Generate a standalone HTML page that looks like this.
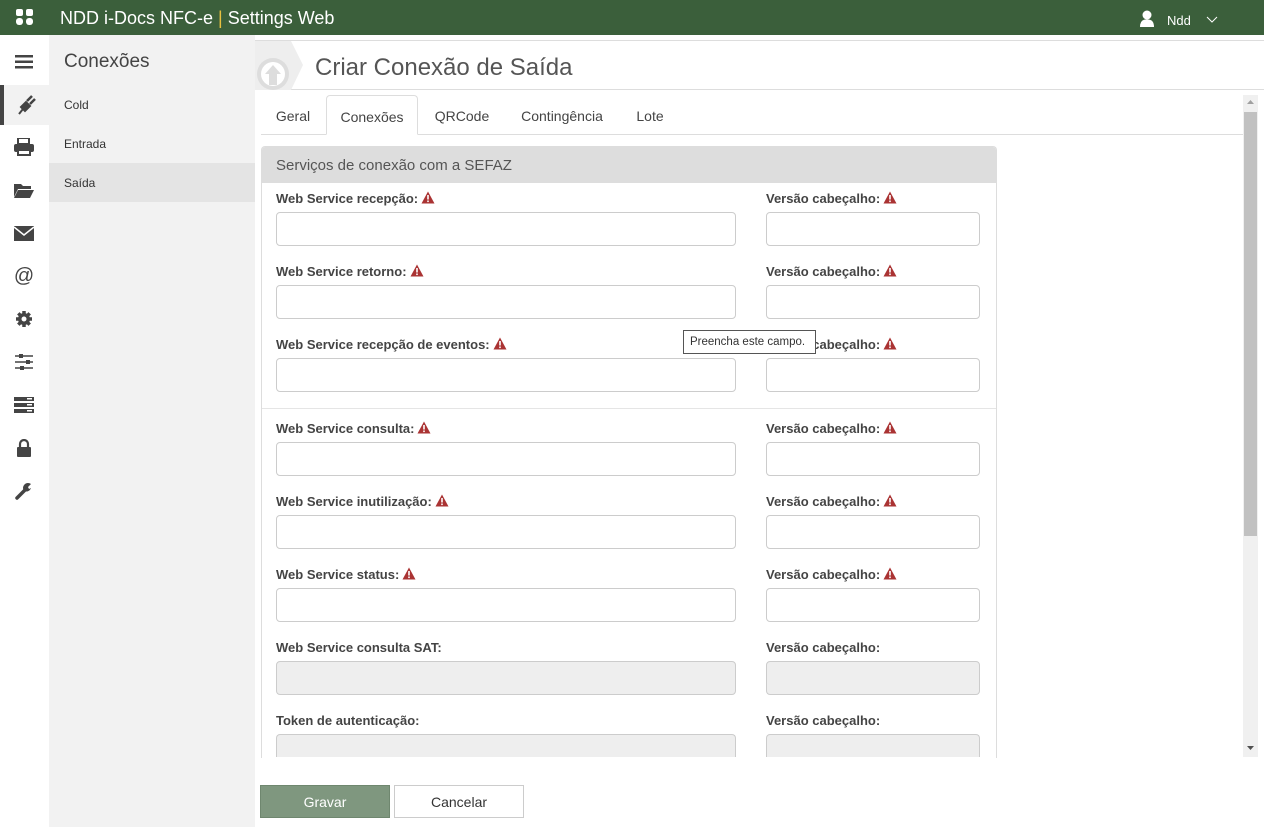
<!DOCTYPE html>
<html><head><meta charset="utf-8"><style>
*{box-sizing:border-box;margin:0;padding:0}
body{width:1264px;height:827px;overflow:hidden;font-family:"Liberation Sans",sans-serif;background:#fff;position:relative;color:#444}
.top{position:absolute;left:0;top:0;width:1264px;height:35px;background:#3b5f3b;color:#fff}
.top .t{position:absolute;left:60px;top:8px;font-size:18px}
.ic{position:absolute;left:0;top:35px;width:49px;height:792px;background:#fff}
.ic div{position:absolute;left:12px;width:24px;height:24px;display:flex;align-items:center;justify-content:center}
.side{position:absolute;left:49px;top:35px;width:206px;height:792px;background:#f2f2f2}
.side h2{position:absolute;left:15px;top:16px;font-size:19px;font-weight:normal;color:#444}
.side .it{position:absolute;left:0;width:206px;height:39px;font-size:12px;padding:13px 15px;color:#333}
.hdr{position:absolute;left:255px;top:40px;width:1009px;height:50px;border-top:1px solid #ddd;border-bottom:1px solid #ddd}
.hdr h1{position:absolute;left:60px;top:13px;font-size:24px;font-weight:normal;color:#555}
.tabs{position:absolute;left:261px;top:95px;width:982px;height:40px;border-bottom:1px solid #ddd}
.tab{position:absolute;top:0;height:40px;font-size:14px;padding-top:13px;color:#444;text-align:center}
.tab.a{border:1px solid #ddd;border-bottom:1px solid #fff;border-radius:4px 4px 0 0;background:#fff;height:40px}
.panel{position:absolute;left:261px;top:146px;width:736px;height:612px;border:1px solid #ddd;border-bottom:none;border-radius:4px 4px 0 0;overflow:hidden}
.ph{height:36px;background:#ddd;font-size:15px;padding:10px 14px;color:#555}
.lbl{position:absolute;font-size:13px;font-weight:bold;color:#444}
.inp{position:absolute;height:34px;border:1px solid #ccc;border-radius:4px;background:#fff}
.inp.d{background:#eee}
.w{display:inline-block;vertical-align:-1px;margin-left:3px}
.sb{position:absolute;left:1243px;top:95px;width:15px;height:662px;background:#f0f0f0}
.btn{position:absolute;top:785px;height:33px;font-size:14px;text-align:center;padding-top:8px}
</style></head><body>
<div class="top">
<svg style="position:absolute;left:16px;top:9px" width="18" height="17" viewBox="0 0 18 17"><rect x="0" y="0" width="7" height="7" rx="2" fill="#fff"/><rect x="10" y="0" width="7" height="7" rx="2" fill="#fff"/><rect x="0" y="9" width="7" height="7" rx="3" fill="#fff"/><rect x="10" y="9" width="7" height="7" rx="3" fill="#fff"/></svg>
<div class="t">NDD i-Docs NFC-e <span style="color:#e8c040">|</span> Settings Web</div>
<svg style="position:absolute;left:1139px;top:10px" width="16" height="17" viewBox="0 0 16 17"><circle cx="8" cy="5" r="4.5" fill="#fff"/><path d="M1 17 Q1 9 8 9.5 Q15 9 15 17Z" fill="#fff"/></svg>
<div style="position:absolute;left:1167px;top:13px;font-size:13px">Ndd</div>
<svg style="position:absolute;left:1206px;top:16px" width="12" height="7"><path d="M1 1 L6 6 L11 1" stroke="#fff" fill="none"/></svg>
</div>
<div class="ic">
<div style="top:15px"><svg width="18" height="14"><rect y="0" width="18" height="2.5" fill="#444"/><rect y="5.5" width="18" height="2.5" fill="#444"/><rect y="11" width="18" height="2.5" fill="#444"/></svg></div>
<div style="left:0;top:50px;width:49px;height:40px;background:#f2f2f2;border-left:4px solid #444"><svg width="20" height="20" viewBox="0 0 20 20"><path d="M2 19 L6 14 L4 12 L9 7 L13 11 L8 16 L6 14" fill="#444" stroke="#444" stroke-width="2"/><path d="M10 6 L15 1 M13 9 L18 4" stroke="#444" stroke-width="2.5"/></svg></div>
<div style="top:100px"><svg width="20" height="18"><rect x="4" y="0" width="11" height="6" fill="none" stroke="#444" stroke-width="2"/><rect x="0" y="6" width="20" height="8" rx="2" fill="#444"/><rect x="4" y="12" width="12" height="5" fill="#fff" stroke="#444" stroke-width="2"/></svg></div>
<div style="top:143px"><svg width="20" height="16"><path d="M0 2 L7 2 L9 4 L17 4 L17 7 L4 7 L0 15Z M4 8 L20 8 L16 16 L0 16Z" fill="#444"/></svg></div>
<div style="top:186px"><svg width="20" height="15"><rect width="20" height="15" fill="#444"/><path d="M0 1 L10 9 L20 1" stroke="#fff" stroke-width="1.5" fill="none"/></svg></div>
<div style="top:229px;font-size:20px;color:#444">@</div>
<div style="top:272px"><svg width="18" height="18" viewBox="0 0 18 18"><circle cx="9" cy="9" r="6" fill="#444"/><g stroke="#444" stroke-width="3.5"><path d="M9 1V17M1 9H17M3.3 3.3L14.7 14.7M14.7 3.3L3.3 14.7"/></g><circle cx="9" cy="9" r="2.5" fill="#fff"/></svg></div>
<div style="top:315px"><svg width="18" height="16"><g stroke="#444" stroke-width="1.5"><path d="M0 2H18M0 8H18M0 14H18"/></g><rect x="4" y="0" width="4" height="4" fill="#444"/><rect x="11" y="6" width="4" height="4" fill="#444"/><rect x="5" y="12" width="4" height="4" fill="#444"/></svg></div>
<div style="top:358px"><svg width="20" height="16"><rect y="0" width="20" height="4" fill="#444"/><rect y="6" width="20" height="4" fill="#444"/><rect y="12" width="20" height="4" fill="#444"/><g fill="#fff"><rect x="13" y="1" width="5" height="1.5"/><rect x="13" y="7" width="5" height="1.5"/><rect x="13" y="13" width="5" height="1.5"/></g></svg></div>
<div style="top:401px"><svg width="16" height="18"><path d="M4 8V5a4 4 0 0 1 8 0v3" stroke="#444" stroke-width="2.2" fill="none"/><rect x="1" y="8" width="14" height="10" rx="1" fill="#444"/></svg></div>
<div style="top:444px"><svg width="18" height="18" viewBox="0 0 18 18"><path d="M2 16 L10 8" stroke="#444" stroke-width="3.5" stroke-linecap="round"/><path d="M9 9 A5 5 0 0 1 16 2 L13 5 L14 7 L16 6 A5 5 0 0 1 9 9Z" fill="#444"/></svg></div>
</div>
<div class="side">
<h2>Conexões</h2>
<div class="it" style="top:50px">Cold</div>
<div class="it" style="top:89px">Entrada</div>
<div class="it" style="top:128px;background:#e4e4e4">Saída</div>
</div>
<div class="hdr">
<svg style="position:absolute;left:0;top:0" width="50" height="49"><path d="M0 0 H36 L48 24 L36 49 H0Z" fill="#eee"/><circle cx="18" cy="33" r="16" fill="#ddd"/><circle cx="18" cy="33" r="12" fill="#fff"/><path d="M18 24 L26 33 H22 V44 H14 V33 H10Z" fill="#ddd"/></svg>
<h1>Criar Conexão de Saída</h1>
</div>
<div class="tabs">
<div class="tab" style="left:0;width:64px">Geral</div>
<div class="tab a" style="left:65px;width:92px">Conexões</div>
<div class="tab" style="left:160px;width:82px">QRCode</div>
<div class="tab" style="left:246px;width:110px">Contingência</div>
<div class="tab" style="left:362px;width:54px">Lote</div>
</div>
<div class="sb"><div style="position:absolute;left:1px;top:17px;width:13px;height:424px;background:#c1c1c1"></div>
<svg style="position:absolute;left:4px;top:5px" width="7" height="5"><path d="M0 4L3.5 0L7 4Z" fill="#a0a0a0"/></svg>
<svg style="position:absolute;left:4px;top:651px" width="7" height="5"><path d="M0 0L3.5 4L7 0Z" fill="#505050"/></svg></div>
<div class="panel"><div class="ph">Serviços de conexão com a SEFAZ</div>
<div style="position:absolute;left:0;top:261px;width:736px;border-top:1px solid #e5e5e5"></div>
</div>
<div id="f"></div>
<div style="position:absolute;left:683px;top:330px;width:133px;height:24px;border:1px solid #555;background:#fff;font-size:11.5px;padding:5px 6px;color:#333;z-index:5;white-space:nowrap">Preencha este campo.</div>
<div class="btn" style="left:260px;width:130px;background:#7f977f;color:#fff;border:1px solid #6f876f">Gravar</div>
<div class="btn" style="left:394px;width:130px;border:1px solid #ccc;color:#333">Cancelar</div>
<script>
var W='<svg class="w" width="14" height="13" viewBox="0 0 14 13"><path d="M7 0.5L13.5 12.5H0.5Z" fill="#a33"/><rect x="6.2" y="4" width="1.6" height="4.5" fill="#fff"/><rect x="6.2" y="9.5" width="1.6" height="1.6" fill="#fff"/></svg>';
var rows=[["Web Service recepção",198,1],["Web Service retorno",271,1],["Web Service recepção de eventos",344,1],["Web Service consulta",428,1],["Web Service inutilização",501,1],["Web Service status",574,1],["Web Service consulta SAT",647,0],["Token de autenticação",720,0]];
var h='';rows.forEach(function(r){var y=r[1],w=r[2]?W:'',d=r[2]?'':' d';
h+='<div class="lbl" style="left:276px;top:'+(y-7)+'px">'+r[0]+':'+w+'</div>';
h+='<div class="lbl" style="left:766px;top:'+(y-7)+'px">Versão cabeçalho:'+w+'</div>';
var ih=Math.min(34,757-(y+14));
h+='<div class="inp'+d+'" style="left:276px;top:'+(y+14)+'px;width:460px;height:'+ih+'px;'+(ih<34?'border-bottom:none;border-radius:4px 4px 0 0':'')+'"></div>';
h+='<div class="inp'+d+'" style="left:766px;top:'+(y+14)+'px;width:214px;height:'+ih+'px;'+(ih<34?'border-bottom:none;border-radius:4px 4px 0 0':'')+'"></div>';});
document.getElementById('f').innerHTML=h;
</script>
</body></html>
